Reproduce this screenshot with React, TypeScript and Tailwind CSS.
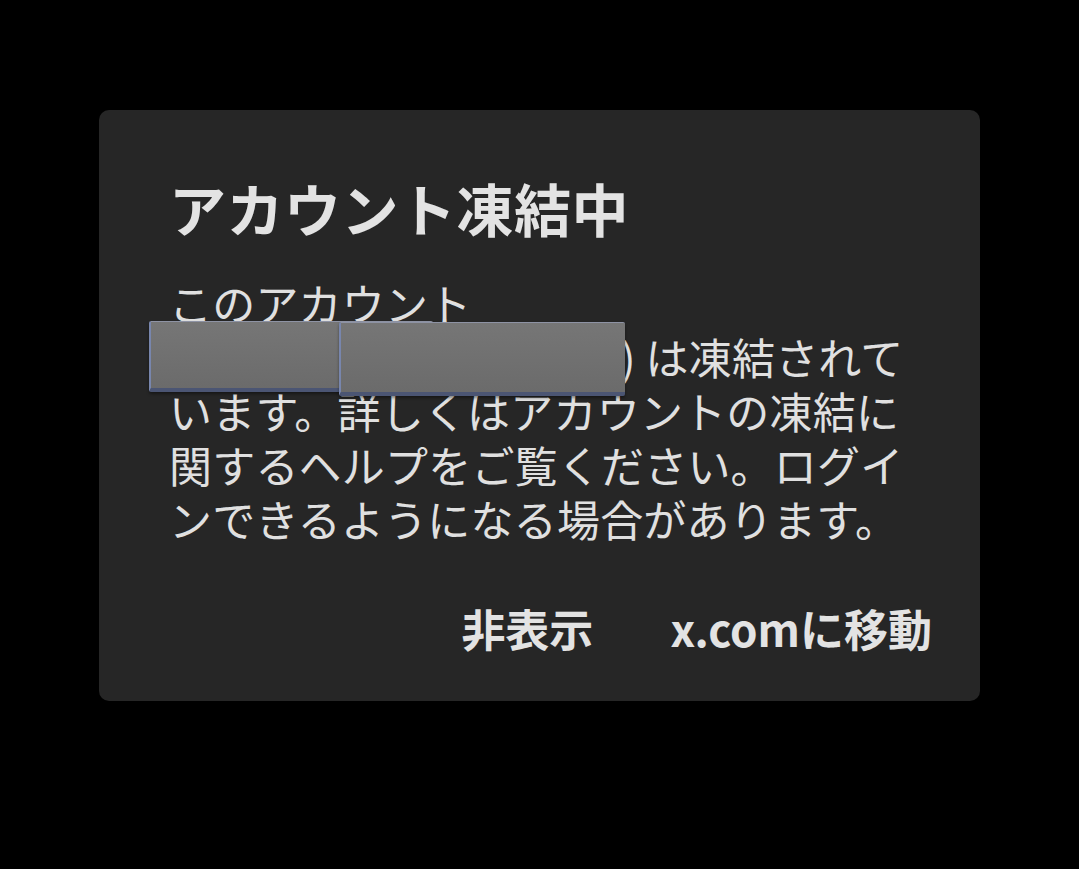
import React from "react";

export default function App() {
  return (
    <div
      className="w-[1079px] h-[869px] bg-black pt-[110px] pl-[99px]"
      style={{ fontFamily: '"Noto Sans CJK JP", "Noto Sans", sans-serif' }}
    >
      <div className="relative w-[881px] h-[591px] bg-[#262626] rounded-[10px] pt-[62px] pl-[70px] pr-[48px] flex flex-col">
        <h1 className="text-[57px] leading-[70px] font-bold text-[#e3e3e3] tracking-[0.5px]">
          アカウント凍結中
        </h1>
        <div className="mt-[33px] text-[43px] leading-[54px] text-[#e0e0e0] font-normal whitespace-nowrap tracking-[0.2px]">
          <div>このアカウント</div>
          <div>
            <span className="inline-block w-[452px]">&nbsp;</span>) は凍結されて
          </div>
          <div>います。詳しくはアカウントの凍結に</div>
          <div>関するヘルプをご覧ください。ログイ</div>
          <div>ンできるようになる場合があります。</div>
        </div>
        <div className="mt-[57px] flex justify-end gap-[77px] text-[44px] leading-[52px] font-bold text-[#e3e3e3]">
          <span>非表示</span>
          <span>x.comに移動</span>
        </div>

        <div className="absolute left-[50px] top-[211px] w-[284px] h-[71px] rounded-[2px] bg-gradient-to-b from-[#767676] to-[#6b6b6b] border-t border-t-[#8e93a4] border-l-2 border-l-[#7886ad] border-b-[4px] border-b-[#4b5573] shadow-[0_2px_3px_rgba(0,0,0,0.4)]" />
        <div className="absolute left-[240px] top-[212px] w-[286px] h-[74px] rounded-[2px] bg-gradient-to-b from-[#767676] to-[#6b6b6b] border-t border-t-[#8e93a4] border-l-2 border-l-[#7886ad] border-b-[4px] border-b-[#4b5573] shadow-[0_2px_3px_rgba(0,0,0,0.4)]" />
      </div>
    </div>
  );
}
